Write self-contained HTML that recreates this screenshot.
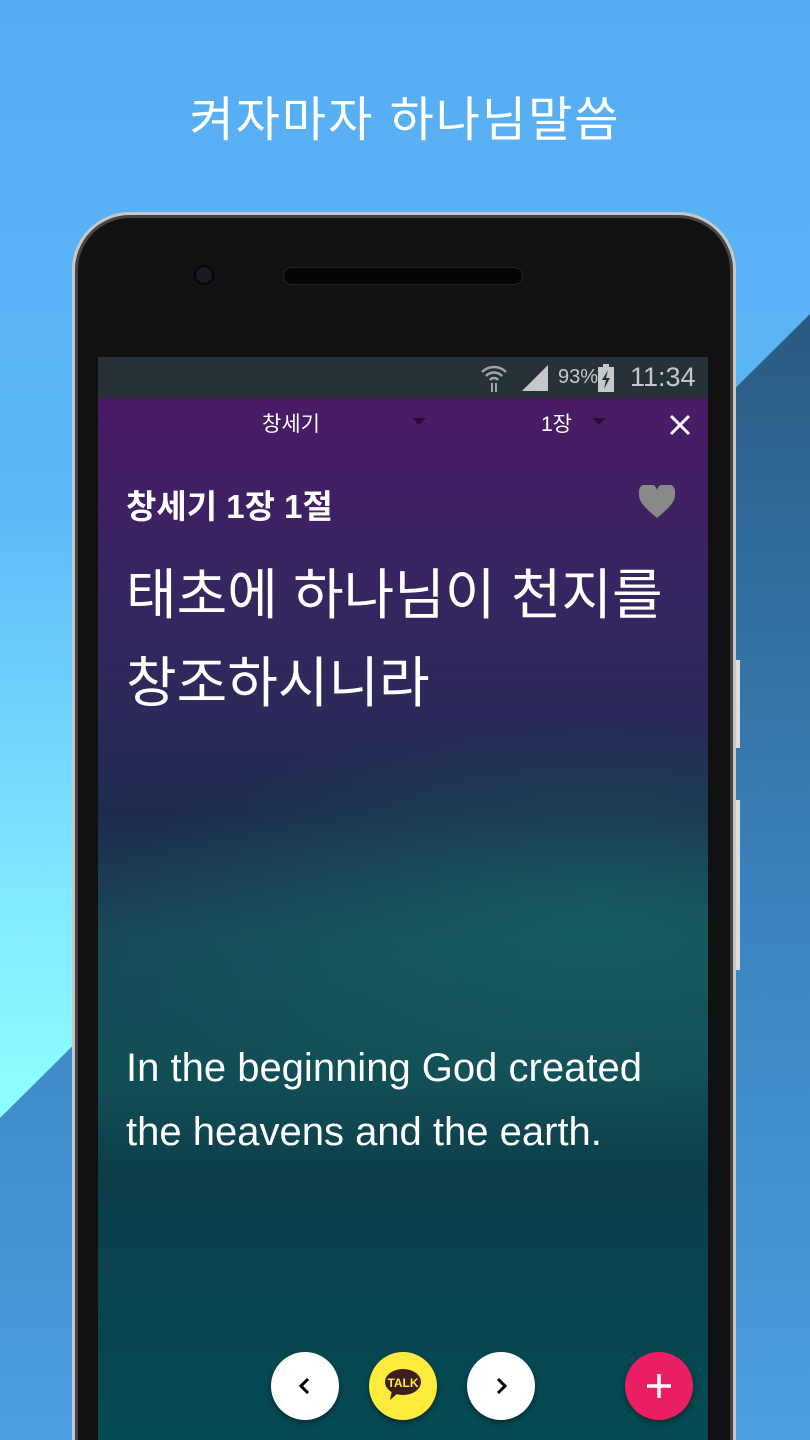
<!DOCTYPE html>
<html><head><meta charset="utf-8"><style>
*{margin:0;padding:0;box-sizing:border-box}
html,body{width:810px;height:1440px;overflow:hidden}
body{position:relative;font-family:"Liberation Sans","Noto Sans CJK KR",sans-serif;background:linear-gradient(180deg,#56acf2 0%,#5cb8f8 35%,#7ce6ff 60%,#8cfcff 75%,#8cfcff 100%)}
.diag{position:absolute;left:0;top:0;width:810px;height:1440px}
.title{position:absolute;top:80px;left:0;width:810px;text-align:center;color:#fff;font-size:48px;letter-spacing:2px}
.phone{position:absolute;left:72px;top:212px;width:664px;height:1300px;border-radius:58px;background:#111;border:3px solid #c8c8c8;box-shadow:inset 0 0 0 3px #444}
.cam{position:absolute;left:194px;top:265px;width:20px;height:20px;border-radius:50%;background:#1a1a24;border:2px solid #050505}
.spk{position:absolute;left:283px;top:267px;width:240px;height:18px;border-radius:9px;background:#050505;border:1px solid #222}
.screen{position:absolute;left:98px;top:357px;width:610px;height:1083px;overflow:hidden}
.status{height:41px;background:#263238;color:#c5c9cb;position:relative}
.app{position:absolute;top:41px;left:0;width:610px;height:1042px;background:
radial-gradient(ellipse 500px 200px at 500px 520px,rgba(20,110,100,.55),transparent),
linear-gradient(180deg,#4a1a66 0%,#3a2462 15%,#2c2a5a 30%,#1e2c50 40%,#184a58 52%,#124e56 65%,#0d3e4a 75%,#074650 90%,#054a52 100%)}
.w{color:#fff;position:absolute;white-space:nowrap}
.btn{position:absolute;top:1352px;width:68px;height:68px;border-radius:50%;box-shadow:0 3px 6px rgba(0,0,0,.4);display:flex;align-items:center;justify-content:center}
.sidebtn{position:absolute;left:736px;width:4px;background:#ddd}
</style></head><body>
<svg class="diag" viewBox="0 0 810 1440"><defs><linearGradient id="g" x1="0" y1="0" x2="0" y2="1"><stop offset="0" stop-color="#2a5a82"/><stop offset="0.5" stop-color="#3a82bc"/><stop offset="1" stop-color="#4a9ee2"/></linearGradient></defs><polygon points="0,1118 810,314 810,1440 0,1440" fill="url(#g)"/></svg>
<div class="title">켜자마자 하나님말씀</div>
<div class="sidebtn" style="top:660px;height:88px"></div>
<div class="sidebtn" style="top:800px;height:170px"></div>
<div class="phone"></div>
<div class="cam"></div>
<div class="spk"></div>
<div class="screen">
 <div class="status">
  <svg style="position:absolute;left:382px;top:6px" width="28" height="30" viewBox="0 0 28 30"><path d="M2 9a17 17 0 0 1 24 0M6 13a11 11 0 0 1 16 0M10 17a5 5 0 0 1 8 0" stroke="#a0a6a8" stroke-width="2.5" fill="none"/><path d="M12 20v9M16 20v9" stroke="#a0a6a8" stroke-width="2"/></svg>
  <svg style="position:absolute;left:424px;top:8px" width="28" height="26" viewBox="0 0 28 26"><polygon points="0,26 26,0 26,26" fill="#c5c9cb"/></svg>
  <span style="position:absolute;left:460px;top:9px;font-size:20px">93%</span>
  <svg style="position:absolute;left:500px;top:7px" width="16" height="28" viewBox="0 0 16 28"><rect x="5" y="0" width="6" height="3" fill="#c5c9cb"/><rect x="0" y="3" width="16" height="25" fill="#c5c9cb"/><path d="M10 6L4 16h4l-2 9 6-11H8z" fill="#263238"/></svg>
  <span style="position:absolute;left:532px;top:5px;font-size:27px">11:34</span>
 </div>
 <div class="app">
  <div class="w" style="left:164px;top:10px;font-size:21px">창세기</div>
  <div style="position:absolute;left:314px;top:20px;border:7px solid transparent;border-top:7px solid #2a0d30"></div>
  <div class="w" style="left:443px;top:10px;font-size:21px">1장</div>
  <div style="position:absolute;left:494px;top:20px;border:7px solid transparent;border-top:7px solid #2a0d30"></div>
  <svg style="position:absolute;left:571px;top:16px" width="22" height="22" viewBox="0 0 22 22"><path d="M2 2L20 20M20 2L2 20" stroke="#fff" stroke-width="3"/></svg>
  <div class="w" style="left:28px;top:82px;font-size:33px;font-weight:bold">창세기 1장 1절</div>
  <svg style="position:absolute;left:541px;top:87px" width="36" height="34" viewBox="0 0 36 34"><path d="M18 33C6 23 0 17 0 10A9 9 0 0 1 18 5 9 9 0 0 1 36 10c0 7-6 13-18 23z" fill="#888"/></svg>
  <div class="w" style="left:28px;top:153px;font-size:55px;line-height:88px">태초에 하나님이 천지를<br>창조하시니라</div>
  <div class="w" style="left:28px;top:638px;font-size:40px;line-height:64px">In the beginning God created<br>the heavens and the earth.</div>
 </div>
</div>
<div class="btn" style="left:271px;background:#fff"><svg width="16" height="20" viewBox="0 0 16 20"><path d="M11 3L4 10l7 7" stroke="#000" stroke-width="3" fill="none"/></svg></div>
<div class="btn" style="left:369px;background:#ffeb3b"><svg width="40" height="36" viewBox="0 0 40 36"><ellipse cx="20" cy="14" rx="18" ry="13" fill="#3c1e1e"/><path d="M9 22l-2 10 8-7z" fill="#3c1e1e"/><text x="20" y="19" font-size="12" font-weight="bold" fill="#ffeb3b" text-anchor="middle" font-family="Liberation Sans">TALK</text></svg></div>
<div class="btn" style="left:467px;background:#fff"><svg width="16" height="20" viewBox="0 0 16 20"><path d="M5 3l7 7-7 7" stroke="#000" stroke-width="3" fill="none"/></svg></div>
<div class="btn" style="left:625px;background:#e91e63"><svg width="26" height="26" viewBox="0 0 26 26"><path d="M13 1v24M1 13h24" stroke="#fff" stroke-width="3.5"/></svg></div>
</body></html>
